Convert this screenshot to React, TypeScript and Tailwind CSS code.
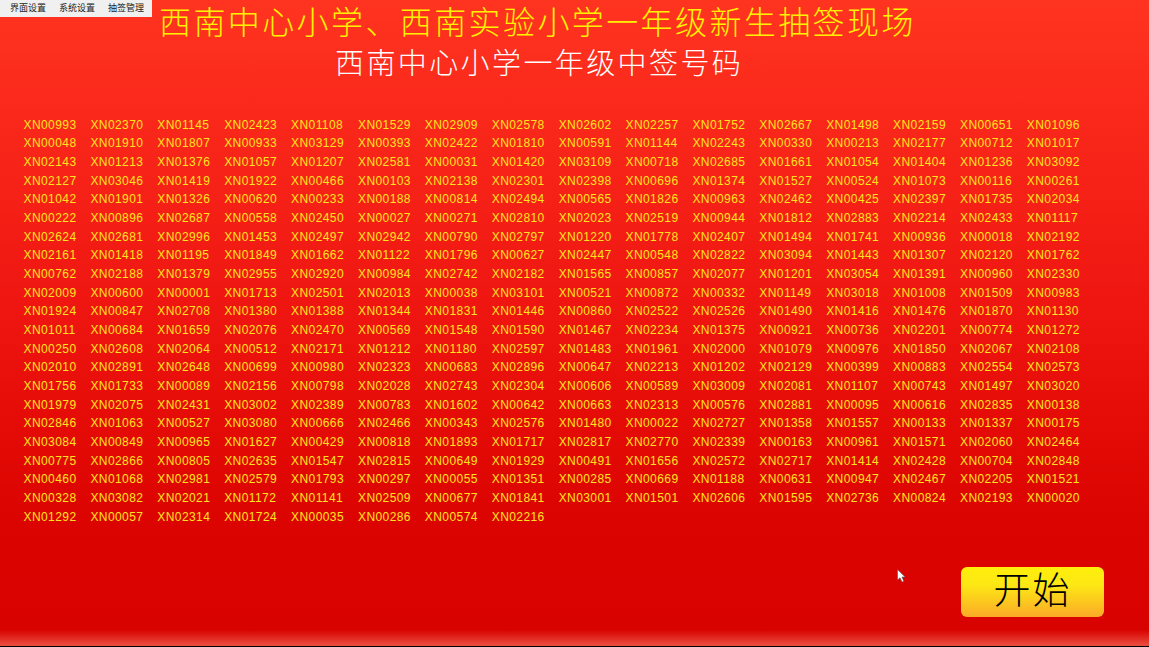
const rows = [
  '00993 02370 01145 02423 01108 01529 02909 02578 02602 02257 01752 02667 01498 02159 00651 01096',
  '00048 01910 01807 00933 03129 00393 02422 01810 00591 01144 02243 00330 00213 02177 00712 01017',
  '02143 01213 01376 01057 01207 02581 00031 01420 03109 00718 02685 01661 01054 01404 01236 03092',
  '02127 03046 01419 01922 00466 00103 02138 02301 02398 00696 01374 01527 00524 01073 00116 00261',
  '01042 01901 01326 00620 00233 00188 00814 02494 00565 01826 00963 02462 00425 02397 01735 02034',
  '00222 00896 02687 00558 02450 00027 00271 02810 02023 02519 00944 01812 02883 02214 02433 01117',
  '02624 02681 02996 01453 02497 02942 00790 02797 01220 01778 02407 01494 01741 00936 00018 02192',
  '02161 01418 01195 01849 01662 01122 01796 00627 02447 00548 02822 03094 01443 01307 02120 01762',
  '00762 02188 01379 02955 02920 00984 02742 02182 01565 00857 02077 01201 03054 01391 00960 02330',
  '02009 00600 00001 01713 02501 02013 00038 03101 00521 00872 00332 01149 03018 01008 01509 00983',
  '01924 00847 02708 01380 01388 01344 01831 01446 00860 02522 02526 01490 01416 01476 01870 01130',
  '01011 00684 01659 02076 02470 00569 01548 01590 01467 02234 01375 00921 00736 02201 00774 01272',
  '00250 02608 02064 00512 02171 01212 01180 02597 01483 01961 02000 01079 00976 01850 02067 02108',
  '02010 02891 02648 00699 00980 02323 00683 02896 00647 02213 01202 02129 00399 00883 02554 02573',
  '01756 01733 00089 02156 00798 02028 02743 02304 00606 00589 03009 02081 01107 00743 01497 03020',
  '01979 02075 02431 03002 02389 00783 01602 00642 00663 02313 00576 02881 00095 00616 02835 00138',
  '02846 01063 00527 03080 00666 02466 00343 02576 01480 00022 02727 01358 01557 00133 01337 00175',
  '03084 00849 00965 01627 00429 00818 01893 01717 02817 02770 02339 00163 00961 01571 02060 02464',
  '00775 02866 00805 02635 01547 02815 00649 01929 00491 01656 02572 02717 01414 02428 00704 02848',
  '00460 01068 02981 02579 01793 00297 00055 01351 00285 00669 01188 00631 00947 02467 02205 01521',
  '00328 03082 02021 01172 01141 02509 00677 01841 03001 01501 02606 01595 02736 00824 02193 00020',
  '01292 00057 02314 01724 00035 00286 00574 02216',
];

const codes = rows.join(' ').split(' ').map((n) => 'XN' + n);

export default function App() {
  return (
    <div className="relative flex h-[647px] w-[1149px] flex-col overflow-hidden border-b border-black bg-[linear-gradient(to_bottom,#ff3420_0%,#fb2a1c_15%,#ee1410_50%,#dc0400_80%,#d80200_97.5%,#ea4a3c_99.8%)] font-['Liberation_Sans','Noto_Sans_CJK_SC',sans-serif]">
      <div className="flex h-[17px] w-[152px] items-center bg-[#f0f0f0] pl-[10px] text-[9px] leading-none text-[#222]">
        <span className="w-[49px]">界面设置</span>
        <span className="w-[49px]">系统设置</span>
        <span>抽签管理</span>
      </div>

      <h1 className="-mt-[17px] h-[47px] whitespace-nowrap pl-[159px] pt-[3px] text-[32px] font-light leading-[40px] tracking-[2.4px] text-[#fff200]">
        西南中心小学、西南实验小学一年级新生抽签现场
      </h1>
      <h2 className="h-[42px] whitespace-nowrap pl-[335px] text-[29px] font-light leading-[34px] tracking-[2.4px] text-white">
        西南中心小学一年级中签号码
      </h2>

      <div className="mt-[26.5px] grid grid-cols-[repeat(16,66.9px)] pl-[23.5px] text-[12px] leading-[18.67px] tracking-[0.42px] text-[#ffe41e]">
        {codes.map((code, i) => (
          <span key={i}>{code}</span>
        ))}
      </div>

      <div className="flex flex-1 items-end justify-end pb-[29px] pr-[45px]">
        <button className="h-[50px] w-[143px] rounded-[6px] bg-[linear-gradient(to_bottom,#ffee0c_0%,#fde814_35%,#fbaa28_100%)] text-[37px] font-light leading-[50px] tracking-[2px] text-black">
          开始
        </button>
      </div>

      <svg className="absolute left-[897px] top-[569px]" width="10" height="15" viewBox="0 0 10 15">
        <path d="M0.5 0.5 L0.5 11 L3 8.8 L5 13 L6.8 12.2 L5 8 L8.2 8 Z" fill="#fff" stroke="#555" strokeWidth="0.6" />
      </svg>
    </div>
  );
}
